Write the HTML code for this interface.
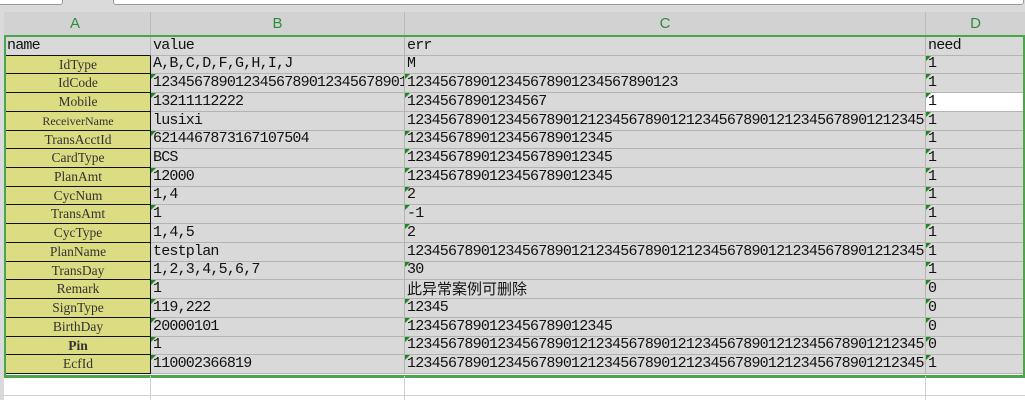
<!DOCTYPE html>
<html><head><meta charset="utf-8"><style>
body{margin:0;width:1025px;height:400px;background:#fff;position:relative;overflow:hidden;font-family:"Liberation Mono","Noto Sans CJK SC",monospace;}
.top{position:absolute;left:0;top:0;width:1025px;height:12px;background:#dadada;}
.tab1{position:absolute;left:-2px;top:-2px;width:63px;height:5px;background:#fff;border:1px solid #999;border-radius:0 0 3px 3px;}
.tab2{position:absolute;left:113px;top:-2px;width:909px;height:5px;background:#fff;border:1px solid #999;border-radius:0 0 3px 3px;}
.hdr{position:absolute;top:12px;height:23px;background:#d2d2d2;color:#2e8b3e;font-family:"Liberation Sans",sans-serif;font-size:15px;text-align:center;line-height:24px;border-right:1px solid #bbb;box-sizing:border-box;}
.row{position:absolute;left:5px;width:1020px;}
.c{position:absolute;top:0;bottom:0;background:#d9d9d9;border-bottom:1px solid #b4b4b4;border-right:1px solid #b4b4b4;box-sizing:border-box;overflow:hidden;white-space:nowrap;font-size:15px;letter-spacing:-0.8px;color:#111;padding-left:2px;line-height:18px;display:flex;align-items:flex-end;}
.a{left:0;width:146px;background:#dcdc82;border:1px solid #111;border-top:none;font-family:"Liberation Serif",serif;font-size:13.5px;letter-spacing:0;color:#333;justify-content:center;padding:0;align-items:center;}
.b{left:146px;width:254px;}
.cc{left:400px;width:521px;}
.d{left:921px;width:99px;}
.m::before{content:"";position:absolute;left:0;top:0;border-top:5px solid #1a8a1a;border-right:5px solid transparent;}
.white{background:#fff;}
.green{position:absolute;left:4px;top:35px;width:1017px;height:338px;border:2px solid #4aa64a;border-bottom-width:3px;}
.grid{position:absolute;top:376px;height:24px;border-right:1px solid #d0d0d0;}
.cn{font-size:15px;letter-spacing:0;font-family:"Noto Sans CJK SC",sans-serif;}
</style></head><body>
<div class="top"><div class="tab1"></div><div class="tab2"></div></div>
<div class="hdr" style="left:0;width:151px">A</div>
<div class="hdr" style="left:151px;width:254px">B</div>
<div class="hdr" style="left:405px;width:521px">C</div>
<div class="hdr" style="left:926px;width:99px;border-right:none">D</div>

<div class="row" style="top:37px;height:19px"><div class="c" style="left:0;width:146px;border-bottom:1px solid #111">name</div><div class="c b">value</div><div class="c cc">err</div><div class="c d">need</div></div>
<div class="row" style="top:56px;height:18px"><div class="c a">IdType</div><div class="c b">A,B,C,D,F,G,H,I,J</div><div class="c cc">M</div><div class="c d m">1</div></div>
<div class="row" style="top:74px;height:19px"><div class="c a">IdCode</div><div class="c b m">12345678901234567890123456789012</div><div class="c cc m">123456789012345678901234567890123</div><div class="c d m">1</div></div>
<div class="row" style="top:93px;height:19px"><div class="c a">Mobile</div><div class="c b m">13211112222</div><div class="c cc m">12345678901234567</div><div class="c d m white">1</div></div>
<div class="row" style="top:112px;height:19px"><div class="c a" style="font-size:12px">ReceiverName</div><div class="c b">lusixi</div><div class="c cc">1234567890123456789012123456789012123456789012123456789012123456789</div><div class="c d m">1</div></div>
<div class="row" style="top:131px;height:18px"><div class="c a">TransAcctId</div><div class="c b m">6214467873167107504</div><div class="c cc m">1234567890123456789012345</div><div class="c d m">1</div></div>
<div class="row" style="top:149px;height:19px"><div class="c a">CardType</div><div class="c b">BCS</div><div class="c cc m">1234567890123456789012345</div><div class="c d m">1</div></div>
<div class="row" style="top:168px;height:19px"><div class="c a">PlanAmt</div><div class="c b m">12000</div><div class="c cc m">1234567890123456789012345</div><div class="c d m">1</div></div>
<div class="row" style="top:187px;height:18px"><div class="c a">CycNum</div><div class="c b">1,4</div><div class="c cc m">2</div><div class="c d m">1</div></div>
<div class="row" style="top:205px;height:19px"><div class="c a">TransAmt</div><div class="c b m">1</div><div class="c cc m">-1</div><div class="c d m">1</div></div>
<div class="row" style="top:224px;height:19px"><div class="c a">CycType</div><div class="c b">1,4,5</div><div class="c cc m">2</div><div class="c d m">1</div></div>
<div class="row" style="top:243px;height:19px"><div class="c a">PlanName</div><div class="c b">testplan</div><div class="c cc">1234567890123456789012123456789012123456789012123456789012123456789</div><div class="c d m">1</div></div>
<div class="row" style="top:262px;height:18px"><div class="c a">TransDay</div><div class="c b">1,2,3,4,5,6,7</div><div class="c cc m">30</div><div class="c d m">1</div></div>
<div class="row" style="top:280px;height:19px"><div class="c a">Remark</div><div class="c b m">1</div><div class="c cc cn">此异常案例可删除</div><div class="c d m">0</div></div>
<div class="row" style="top:299px;height:19px"><div class="c a">SignType</div><div class="c b m">119,222</div><div class="c cc m">12345</div><div class="c d m">0</div></div>
<div class="row" style="top:318px;height:19px"><div class="c a">BirthDay</div><div class="c b m">20000101</div><div class="c cc m">1234567890123456789012345</div><div class="c d m">0</div></div>
<div class="row" style="top:337px;height:18px"><div class="c a" style="font-weight:bold">Pin</div><div class="c b m">1</div><div class="c cc m">1234567890123456789012123456789012123456789012123456789012123456789</div><div class="c d m">0</div></div>
<div class="row" style="top:355px;height:19px"><div class="c a">EcfId</div><div class="c b m">110002366819</div><div class="c cc m">1234567890123456789012123456789012123456789012123456789012123456789</div><div class="c d m">1</div></div>

<div class="green"></div>
<div style="position:absolute;left:0;top:12px;width:4px;height:388px;background:#dadada"></div>
<div class="grid" style="left:150px"></div><div class="grid" style="left:404px"></div><div class="grid" style="left:925px"></div>
<div style="position:absolute;left:0;top:395px;width:1025px;border-top:1px solid #d0d0d0"></div>
</body></html>
